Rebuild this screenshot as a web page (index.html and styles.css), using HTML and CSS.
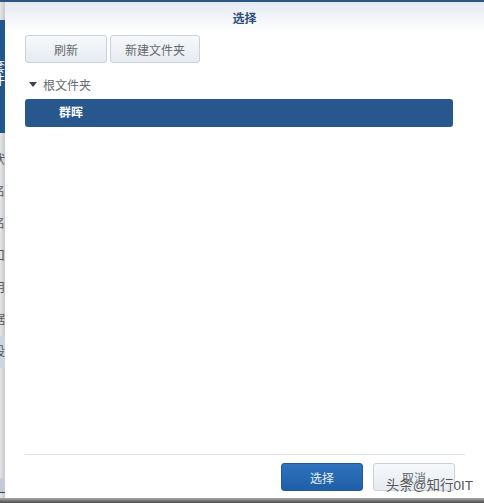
FILE: index.html
```html
<!doctype html>
<html lang="zh-CN">
	<head>
		<meta charset="utf-8">
		<title>选择</title>
		<link rel="stylesheet" href="styles.css">
	</head>
	<body>
		<div class="top-line"></div>
		<div class="page">
			<div class="behind">
				<div class="behind-gap"></div>
				<div class="behind-blue"><span>套件</span></div>
				<ul class="behind-list">
					<li>状</li>
					<li>名</li>
					<li>名</li>
					<li>口</li>
					<li>用</li>
					<li>据</li>
					<li class="behind-row">设</li>
				</ul>
				<div class="behind-foot"></div>
			</div>
			<div class="dialog">
				<div class="dialog-title">选择</div>
				<div class="toolbar">
					<button class="btn btn-refresh">刷新</button>
					<button class="btn btn-new">新建文件夹</button>
				</div>
				<div class="tree">
					<div class="tree-root"><span class="arrow"></span>根文件夹</div>
					<div class="tree-item">群晖</div>
				</div>
				<div class="dialog-bottom">
					<button class="btn-main">选择</button>
					<button class="btn btn-cancel">取消</button>
				</div>
			</div>
		</div>
		<div class="bottom-line"></div>
		<div class="watermark">头条@知行0IT</div>
	</body>
</html>
```

FILE: styles.css
```css
html,
body,
div,
ul,li {
	margin: 0;
	padding: 0;
}
li {
	list-style: none;
}
body {
	display: flex;
	flex-direction: column;
	position: relative;
	width: 484px;
	height: 503px;
	overflow: hidden;
	font-family: "Liberation Sans", "Noto Sans CJK SC", sans-serif;
	font-size: 12px;
	color: #666a6e;
	background: #fff;
}
button {
	font-family: inherit;
	font-size: 12px;
	padding: 0;
	cursor: pointer;
}
.top-line {
	height: 2px;
	background: #2f5583;
}
.page {
	display: flex;
	flex: 1;
	min-height: 0;
}
.behind {
	display: flex;
	flex-direction: column;
	width: 5px;
	overflow: hidden;
	background: linear-gradient(to right, #e6e6e6, #c6c7ca);
}
.behind-gap {
	height: 18px;
}
.behind-blue {
	height: 113px;
	padding-top: 40px;
	box-sizing: border-box;
	color: #fff;
	font-size: 13px;
	line-height: 13px;
	background: #22568f;
}
.behind-blue span {
	display: block;
	width: 13px;
	margin-left: -8px;
}
.behind-list {
	padding-top: 11px;
	color: #555;
	font-size: 12px;
}
.behind-list li {
	height: 32px;
	line-height: 32px;
	text-indent: -7px;
}
.behind-list .behind-row {
	background: #cdd5df;
}
.behind-foot {
	height: 14px;
	margin-top: 110px;
	border-bottom: 1px solid #444;
	background: #c3ccd6;
}
.dialog {
	display: flex;
	flex-direction: column;
	flex: 1;
	min-width: 0;
}
.dialog-title {
	height: 30px;
	line-height: 34px;
	text-align: center;
	font-weight: bold;
	color: #2d4f75;
	background: linear-gradient(#e4e9f2, #fff);
}
.toolbar {
	display: flex;
	gap: 3px;
	padding: 3px 0 0 20px;
}
.btn {
	height: 28px;
	border: 1px solid #c9d1dc;
	border-radius: 3px;
	color: #666a6e;
	background: linear-gradient(#f7f9fb, #e6ebf1);
}
.btn-refresh {
	width: 82px;
}
.btn-new {
	width: 90px;
}
.tree {
	flex: 1;
	padding: 11px 31px 0 20px;
}
.tree-root {
	display: flex;
	align-items: center;
	height: 21px;
	padding-left: 4px;
}
.arrow {
	width: 0;
	height: 0;
	margin-right: 6px;
	border: 4px solid transparent;
	border-top: 5px solid #3c4650;
	border-bottom: 0;
}
.tree-item {
	height: 28px;
	margin-top: 4px;
	padding-left: 34px;
	line-height: 28px;
	font-weight: bold;
	color: #fff;
	border-radius: 3px;
	background: #28578e;
}
.dialog-bottom {
	display: flex;
	justify-content: flex-end;
	gap: 10px;
	height: 44px;
	margin: 0 19px 0 20px;
	padding: 8px 10px 0 0;
	box-sizing: border-box;
	border-top: 1px solid #dfe2e6;
}
.btn-main {
	width: 82px;
	height: 28px;
	color: #e8f0f8;
	border: 1px solid #1f5a9f;
	border-radius: 3px;
	background: linear-gradient(#2f72bd, #1f5fa8);
}
.btn-cancel {
	width: 82px;
}
.bottom-line {
	height: 5px;
	background: linear-gradient(#aaa, #4a4a4a);
}
.watermark {
	position: absolute;
	right: 11px;
	bottom: 9px;
	font-size: 13.5px;
	color: #555;
	text-shadow: 0 0 1px #fff;
}
```
